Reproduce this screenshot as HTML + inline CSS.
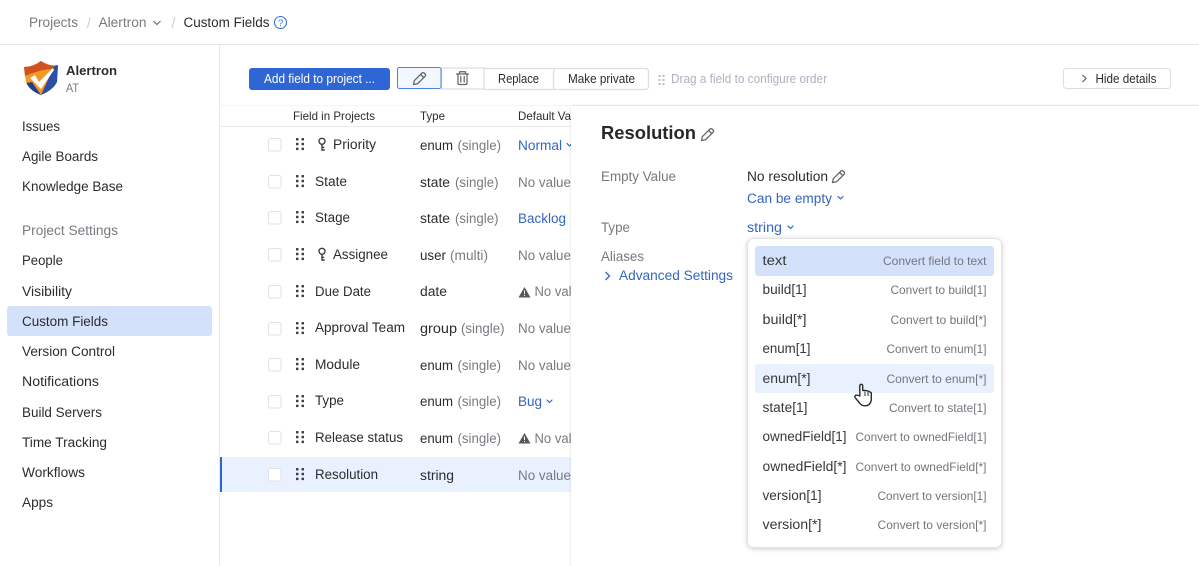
<!DOCTYPE html>
<html><head><meta charset="utf-8"><style>
html,body{margin:0;padding:0;background:#fff;overflow:hidden}
svg{display:block}
text{font-family:"Liberation Sans",sans-serif;font-size:13.5px;fill:#2a2d30}
.g{fill:#787a80}.b{fill:#3465c2}.s{font-size:12px}.d{fill:#35383c}.c{font-size:12px;fill:#74767c}
.i{fill:none;stroke:#606367;stroke-width:1.25;stroke-linecap:round;stroke-linejoin:round}
.cb{fill:#fff;stroke:#e0e2e5}
</style></head><body>
<svg width="1199" height="566" viewBox="0 0 1199 566" xmlns="http://www.w3.org/2000/svg">
<defs>
<filter id="sh" x="-10%" y="-10%" width="120%" height="120%"><feDropShadow dx="0" dy="1" stdDeviation="2.5" flood-color="#000" flood-opacity=".2"/></filter>
<filter id="ps" x="-5%" y="-5%" width="110%" height="110%"><feDropShadow dx="0" dy="0" stdDeviation="1.200" flood-color="#000" flood-opacity=".14"/></filter>
<g id="dots" fill="#3b3e42"><rect x="0.500" y="0" width="2.500" height="2.500" rx=".6"/><rect x="6" y="0" width="2.500" height="2.500" rx=".6"/><rect x="0.500" y="4.800" width="2.500" height="2.500" rx=".6"/><rect x="6" y="4.800" width="2.500" height="2.500" rx=".6"/><rect x="0.500" y="9.600" width="2.500" height="2.500" rx=".6"/><rect x="6" y="9.600" width="2.500" height="2.500" rx=".6"/></g>
<g id="pen"><path class="i" d="M1 13 L1.800 9.200 L9.400 1.600 Q10.500 .6 11.600 1.600 L12.700 2.700 Q13.600 3.800 12.600 4.800 L5 12.300 Z M8.200 3 L11.200 6"/></g>
<g id="key"><circle fill="none" stroke="#3b3e42" stroke-width="1.400" cx="4" cy="3.800" r="3"/><path fill="none" stroke="#3b3e42" stroke-width="1.400" d="M4 6.800 V12.500 H6.800 M4 9.800 H6.200"/></g>
<path id="chev" fill="none" stroke="#3465c2" stroke-width="1.200" stroke-linecap="round" stroke-linejoin="round" d="M0 0 L2.500 2.400 L5 0"/>
</defs>
<rect width="1199" height="566" fill="#fff"/>

<!-- Top breadcrumb -->
<rect x="0" y="44" width="1199" height="1" fill="#e6e7e9"/>
<text x="29" y="27" class="g" textLength="49" lengthAdjust="spacingAndGlyphs">Projects</text>
<path d="M90 17 L87.500 28" stroke="#c9cbce" fill="none"/>
<text x="98.500" y="27" class="g" textLength="48" lengthAdjust="spacingAndGlyphs">Alertron</text>
<path d="M153.500 21 L157 24.500 L160.500 21" stroke="#666" stroke-width="1.100" fill="none"/>
<path d="M175 17 L172 28" stroke="#c9cbce" fill="none"/>
<text x="183.500" y="27" textLength="86" lengthAdjust="spacingAndGlyphs">Custom Fields</text>
<circle cx="280.500" cy="22.500" r="6" fill="none" stroke="#3a72d8" stroke-width="1.100"/>
<text x="278" y="26" style="font-size:9.500px;fill:#3a72d8">?</text>

<!-- Sidebar -->
<rect x="219" y="45" width="1" height="521" fill="#e6e7e9"/>
<path d="M24 67 Q33 67 41 61 Q50 67 58 65 L57 82 Q53 90 41 95 Q29 90 26 82 Z" fill="#f39a22"/>
<path d="M24 67 Q33 67 41 61 Q50 67 58 65 L57.500 69 Q44 68 25 76 Z" fill="#cf5220"/>
<path d="M26.500 83 L32 82 L41 95 Q30 91 26.500 83 Z" fill="#243f8f"/>
<path d="M41 95 L54 66.500 L58 65 L57 82 Q53 90 41 95 Z" fill="#2b4ea6"/>
<path d="M30 78 L35 75 L39 82 L53 68 L54 70 L41 89 Z" fill="#fff"/>
<text x="66" y="75" style="font-weight:bold;font-size:13px" textLength="51" lengthAdjust="spacingAndGlyphs">Alertron</text>
<text x="66" y="92" class="g s" textLength="13" lengthAdjust="spacingAndGlyphs">AT</text>
<rect x="7" y="306" width="205" height="30" rx="3" fill="#d4e1fb"/>
<text x="22" y="131" textLength="38" lengthAdjust="spacingAndGlyphs">Issues</text>
<text x="22" y="161" textLength="76" lengthAdjust="spacingAndGlyphs">Agile Boards</text>
<text x="22" y="191" textLength="101" lengthAdjust="spacingAndGlyphs">Knowledge Base</text>
<text x="22" y="235" class="g" textLength="96" lengthAdjust="spacingAndGlyphs">Project Settings</text>
<text x="22" y="265" textLength="41" lengthAdjust="spacingAndGlyphs">People</text>
<text x="22" y="296" textLength="50" lengthAdjust="spacingAndGlyphs">Visibility</text>
<text x="22" y="326" textLength="86" lengthAdjust="spacingAndGlyphs">Custom Fields</text>
<text x="22" y="356" textLength="93" lengthAdjust="spacingAndGlyphs">Version Control</text>
<text x="22" y="386" textLength="77" lengthAdjust="spacingAndGlyphs">Notifications</text>
<text x="22" y="417" textLength="80" lengthAdjust="spacingAndGlyphs">Build Servers</text>
<text x="22" y="447" textLength="85" lengthAdjust="spacingAndGlyphs">Time Tracking</text>
<text x="22" y="477" textLength="63" lengthAdjust="spacingAndGlyphs">Workflows</text>
<text x="22" y="507" textLength="31" lengthAdjust="spacingAndGlyphs">Apps</text>

<!-- Toolbar -->
<rect x="249" y="68" width="141" height="22" rx="3" fill="#2f66d6"/>
<text x="264" y="83" class="s" style="fill:#fff;font-size:12.500px" textLength="111" lengthAdjust="spacingAndGlyphs">Add field to project ...</text>
<rect x="441.500" y="68" width="43" height="21" fill="#fff" stroke="#dcdee1" stroke-width="1.300"/>
<rect x="484" y="68.500" width="70" height="21" fill="#fff" stroke="#dcdee1" stroke-width="1.300"/>
<rect x="553.500" y="68.500" width="95" height="21" rx="3" fill="#fff" stroke="#dcdee1" stroke-width="1.300"/>
<rect x="397.500" y="67.500" width="43.500" height="21" rx="2" fill="#f2f6fe" stroke="#4a80e4"/>
<use href="#pen" x="412.500" y="71.500"/>
<path class="i" d="M456.500 74 H468.500 M459.500 74 V71.800 H465.500 V74 M458 74 V83 Q458 84.500 459.500 84.500 H465.500 Q467 84.500 467 83 V74 M460.800 76.500 V82 M464.200 76.500 V82"/>
<text x="498" y="83" class="s" style="font-size:12.500px" textLength="41" lengthAdjust="spacingAndGlyphs">Replace</text>
<text x="568" y="83" class="s" style="font-size:12.500px" textLength="67" lengthAdjust="spacingAndGlyphs">Make private</text>
<g fill="#b9bcc8"><rect x="658.500" y="75" width="2" height="2"/><rect x="662.500" y="75" width="2" height="2"/><rect x="658.500" y="79" width="2" height="2"/><rect x="662.500" y="79" width="2" height="2"/><rect x="658.500" y="83" width="2" height="2"/><rect x="662.500" y="83" width="2" height="2"/></g>
<text x="671" y="83" class="s" style="fill:#aeb1c0;font-size:12.500px" textLength="156" lengthAdjust="spacingAndGlyphs">Drag a field to configure order</text>
<rect x="1063.500" y="68.500" width="107" height="20" rx="3" fill="#fff" stroke="#dcdee1"/>
<path d="M1082.500 75 L1086 78.500 L1082.500 82" fill="none" stroke="#55585c" stroke-width="1.100"/>
<text x="1095.500" y="83" class="s" style="font-size:12.500px" textLength="61" lengthAdjust="spacingAndGlyphs">Hide details</text>

<!-- Table -->
<rect x="220" y="105" width="979" height="1" fill="#f3f4f5"/>
<rect x="220" y="126" width="351" height="1" fill="#e9eaec"/>
<text x="293" y="120" class="s" textLength="82" lengthAdjust="spacingAndGlyphs">Field in Projects</text>
<text x="420" y="120" class="s" textLength="25" lengthAdjust="spacingAndGlyphs">Type</text>
<text x="518" y="120" class="s" textLength="53" lengthAdjust="spacingAndGlyphs">Default Va</text>
<rect x="220" y="457" width="351" height="35" fill="#e9f1fe"/>
<rect x="220" y="457" width="2" height="35" fill="#2f66d6"/>

<rect class="cb" x="268.500" y="138.500" width="12.500" height="12.500" rx="2"/>
<rect class="cb" x="268.500" y="175.500" width="12.500" height="12.500" rx="2"/>
<rect class="cb" x="268.500" y="211.500" width="12.500" height="12.500" rx="2"/>
<rect class="cb" x="268.500" y="248.500" width="12.500" height="12.500" rx="2"/>
<rect class="cb" x="268.500" y="285.500" width="12.500" height="12.500" rx="2"/>
<rect class="cb" x="268.500" y="322.500" width="12.500" height="12.500" rx="2"/>
<rect class="cb" x="268.500" y="358.500" width="12.500" height="12.500" rx="2"/>
<rect class="cb" x="268.500" y="395.500" width="12.500" height="12.500" rx="2"/>
<rect class="cb" x="268.500" y="431.500" width="12.500" height="12.500" rx="2"/>
<rect class="cb" x="268.500" y="468.500" width="12.500" height="12.500" rx="2"/>

<use href="#dots" x="295.500" y="138"/>
<use href="#dots" x="295.500" y="175"/>
<use href="#dots" x="295.500" y="211"/>
<use href="#dots" x="295.500" y="248"/>
<use href="#dots" x="295.500" y="285"/>
<use href="#dots" x="295.500" y="322"/>
<use href="#dots" x="295.500" y="358"/>
<use href="#dots" x="295.500" y="395"/>
<use href="#dots" x="295.500" y="431"/>
<use href="#dots" x="295.500" y="468"/>

<use href="#key" x="318" y="137.500"/>
<use href="#key" x="318" y="247.500"/>
<text x="333" y="149" textLength="43" lengthAdjust="spacingAndGlyphs">Priority</text>
<text x="315" y="186" textLength="32" lengthAdjust="spacingAndGlyphs">State</text>
<text x="315" y="222" textLength="35" lengthAdjust="spacingAndGlyphs">Stage</text>
<text x="333" y="259" textLength="55" lengthAdjust="spacingAndGlyphs">Assignee</text>
<text x="315" y="296" textLength="56" lengthAdjust="spacingAndGlyphs">Due Date</text>
<text x="315" y="332" textLength="90" lengthAdjust="spacingAndGlyphs">Approval Team</text>
<text x="315" y="369" textLength="45" lengthAdjust="spacingAndGlyphs">Module</text>
<text x="315" y="405" textLength="29" lengthAdjust="spacingAndGlyphs">Type</text>
<text x="315" y="442" textLength="88" lengthAdjust="spacingAndGlyphs">Release status</text>
<text x="315" y="479" textLength="63" lengthAdjust="spacingAndGlyphs">Resolution</text>

<text x="420" y="150" textLength="33" lengthAdjust="spacingAndGlyphs">enum</text><text x="457.500" y="150" class="g" textLength="43.500" lengthAdjust="spacingAndGlyphs">(single)</text>
<text x="420" y="187" textLength="30" lengthAdjust="spacingAndGlyphs">state</text><text x="455" y="187" class="g" textLength="43.500" lengthAdjust="spacingAndGlyphs">(single)</text>
<text x="420" y="223" textLength="30" lengthAdjust="spacingAndGlyphs">state</text><text x="455" y="223" class="g" textLength="43.500" lengthAdjust="spacingAndGlyphs">(single)</text>
<text x="420" y="260" textLength="26" lengthAdjust="spacingAndGlyphs">user</text><text x="450" y="260" class="g" textLength="38" lengthAdjust="spacingAndGlyphs">(multi)</text>
<text x="420" y="296" textLength="27" lengthAdjust="spacingAndGlyphs">date</text>
<text x="420" y="333" textLength="37" lengthAdjust="spacingAndGlyphs">group</text><text x="461" y="333" class="g" textLength="43.500" lengthAdjust="spacingAndGlyphs">(single)</text>
<text x="420" y="370" textLength="33" lengthAdjust="spacingAndGlyphs">enum</text><text x="457.500" y="370" class="g" textLength="43.500" lengthAdjust="spacingAndGlyphs">(single)</text>
<text x="420" y="406" textLength="33" lengthAdjust="spacingAndGlyphs">enum</text><text x="457.500" y="406" class="g" textLength="43.500" lengthAdjust="spacingAndGlyphs">(single)</text>
<text x="420" y="443" textLength="33" lengthAdjust="spacingAndGlyphs">enum</text><text x="457.500" y="443" class="g" textLength="43.500" lengthAdjust="spacingAndGlyphs">(single)</text>
<text x="420" y="480" textLength="34" lengthAdjust="spacingAndGlyphs">string</text>

<text x="518" y="150" class="b" textLength="44" lengthAdjust="spacingAndGlyphs">Normal</text>
<use href="#chev" x="567" y="143.500"/>
<text x="518" y="187" class="g" textLength="53" lengthAdjust="spacingAndGlyphs">No value</text>
<text x="518" y="223" class="b" textLength="48" lengthAdjust="spacingAndGlyphs">Backlog</text>
<text x="518" y="260" class="g" textLength="53" lengthAdjust="spacingAndGlyphs">No value</text>
<path d="M524.500 287 L530.500 297.500 H518.500 Z" fill="#55585c"/>
<rect x="524" y="290.500" width="1" height="3.500" fill="#fff"/><rect x="524" y="295" width="1" height="1" fill="#fff"/>
<text x="534.500" y="296" class="g" textLength="37" lengthAdjust="spacingAndGlyphs">No val</text>
<text x="518" y="333" class="g" textLength="53" lengthAdjust="spacingAndGlyphs">No value</text>
<text x="518" y="370" class="g" textLength="53" lengthAdjust="spacingAndGlyphs">No value</text>
<text x="518" y="406" class="b" textLength="24" lengthAdjust="spacingAndGlyphs">Bug</text>
<use href="#chev" x="547" y="400"/>
<path d="M524.500 433 L530.500 443.500 H518.500 Z" fill="#55585c"/>
<rect x="524" y="436.500" width="1" height="3.500" fill="#fff"/><rect x="524" y="441" width="1" height="1" fill="#fff"/>
<text x="534.500" y="443" class="g" textLength="37" lengthAdjust="spacingAndGlyphs">No val</text>
<text x="518" y="480" class="g" textLength="53" lengthAdjust="spacingAndGlyphs">No value</text>

<!-- Details panel -->
<rect x="571" y="106" width="640" height="470" fill="#fff" filter="url(#ps)"/>
<text x="601" y="139" style="font-size:18.500px;font-weight:bold;fill:#25282b" textLength="95" lengthAdjust="spacingAndGlyphs">Resolution</text>
<use href="#pen" x="700.500" y="127.500"/>
<text x="601" y="181" class="g" textLength="75" lengthAdjust="spacingAndGlyphs">Empty Value</text>
<text x="747" y="181" textLength="81" lengthAdjust="spacingAndGlyphs">No resolution</text>
<use href="#pen" x="831.500" y="169.500"/>
<text x="747" y="203" class="b" textLength="85" lengthAdjust="spacingAndGlyphs">Can be empty</text>
<use href="#chev" x="838" y="196.500"/>
<text x="601" y="232" class="g" textLength="29" lengthAdjust="spacingAndGlyphs">Type</text>
<text x="747" y="232" class="b" textLength="35" lengthAdjust="spacingAndGlyphs">string</text>
<use href="#chev" x="788" y="226"/>
<text x="601" y="261" class="g" textLength="43" lengthAdjust="spacingAndGlyphs">Aliases</text>
<path d="M605.500 272 L609.500 276 L605.500 280" fill="none" stroke="#3465c2" stroke-width="1.300"/>
<text x="619" y="280" class="b" textLength="114" lengthAdjust="spacingAndGlyphs">Advanced Settings</text>

<!-- Dropdown -->
<rect x="747.500" y="238.500" width="254" height="309" rx="6" fill="#fff" stroke="#e2e3e6" filter="url(#sh)"/>
<rect x="755" y="246" width="239" height="30" rx="3" fill="#d4e1fb"/>
<rect x="755" y="364" width="239" height="29" rx="3" fill="#eaf1fe"/>
<g>
<text x="762.500" y="265" class="d" textLength="24" lengthAdjust="spacingAndGlyphs">text</text>
<text x="762.500" y="294" class="d" textLength="44" lengthAdjust="spacingAndGlyphs">build[1]</text>
<text x="762.500" y="324" class="d" textLength="44" lengthAdjust="spacingAndGlyphs">build[*]</text>
<text x="762.500" y="353" class="d" textLength="48" lengthAdjust="spacingAndGlyphs">enum[1]</text>
<text x="762.500" y="383" class="d" textLength="48" lengthAdjust="spacingAndGlyphs">enum[*]</text>
<text x="762.500" y="412" class="d" textLength="45" lengthAdjust="spacingAndGlyphs">state[1]</text>
<text x="762.500" y="441" class="d" textLength="84" lengthAdjust="spacingAndGlyphs">ownedField[1]</text>
<text x="762.500" y="471" class="d" textLength="84" lengthAdjust="spacingAndGlyphs">ownedField[*]</text>
<text x="762.500" y="500" class="d" textLength="59" lengthAdjust="spacingAndGlyphs">version[1]</text>
<text x="762.500" y="529" class="d" textLength="59" lengthAdjust="spacingAndGlyphs">version[*]</text>
<text x="883" y="265" class="c" textLength="103.500" lengthAdjust="spacingAndGlyphs">Convert field to text</text>
<text x="890.500" y="294" class="c" textLength="96" lengthAdjust="spacingAndGlyphs">Convert to build[1]</text>
<text x="890.500" y="324" class="c" textLength="96" lengthAdjust="spacingAndGlyphs">Convert to build[*]</text>
<text x="886.500" y="353" class="c" textLength="100" lengthAdjust="spacingAndGlyphs">Convert to enum[1]</text>
<text x="886.500" y="383" class="c" textLength="100" lengthAdjust="spacingAndGlyphs">Convert to enum[*]</text>
<text x="889" y="412" class="c" textLength="97.500" lengthAdjust="spacingAndGlyphs">Convert to state[1]</text>
<text x="855.500" y="441" class="c" textLength="131" lengthAdjust="spacingAndGlyphs">Convert to ownedField[1]</text>
<text x="855.500" y="471" class="c" textLength="131" lengthAdjust="spacingAndGlyphs">Convert to ownedField[*]</text>
<text x="877.500" y="500" class="c" textLength="109" lengthAdjust="spacingAndGlyphs">Convert to version[1]</text>
<text x="877.500" y="529" class="c" textLength="109" lengthAdjust="spacingAndGlyphs">Convert to version[*]</text>
</g>

<!-- Hand cursor -->
<path d="M859.800 396 V386 Q859.800 384.300 861.200 384.300 Q862.700 384.300 862.700 386 V390.500 Q867.500 390 871.300 392.800 V400 Q870.300 405.800 865 405.800 Q861.500 405.800 859.500 403 L855.300 397.800 Q854 396 856 395.200 Q858 395 859.800 396 Z" fill="#fff" stroke="#2a2a2a" stroke-width="1.400" stroke-linejoin="round"/>
<path d="M865 391.500 V396 M868 392 V396" stroke="#2a2a2a" stroke-width="1" fill="none"/>
</svg>
</body></html>
